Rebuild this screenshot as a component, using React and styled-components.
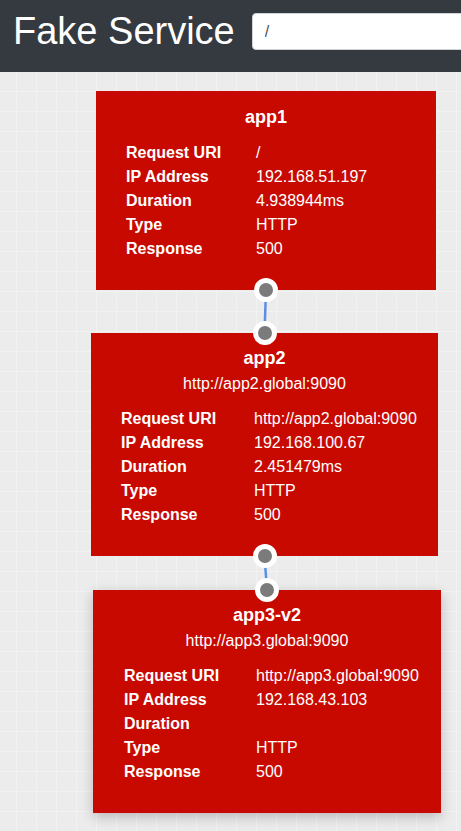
import React from 'react';
import styled, { createGlobalStyle } from 'styled-components';

const Global = createGlobalStyle`
  html, body {
    margin: 0;
    padding: 0;
    background: #ececec;
    font-family: "Liberation Sans", Arial, Helvetica, sans-serif;
    overflow: hidden;
  }
`;

const Page = styled.div`
  width: 461px;
  height: 831px;
  display: flex;
  flex-direction: column;
  overflow: hidden;
`;

const Header = styled.header`
  height: 72px;
  flex-shrink: 0;
  box-sizing: border-box;
  background: #343a40;
  display: flex;
  align-items: center;
  gap: 17px;
  padding: 0 0 9px 13px;
  overflow: hidden;
`;

const Brand = styled.h1`
  margin: 0;
  font-size: 38px;
  line-height: 1.2;
  font-weight: 400;
  color: #fff;
  white-space: nowrap;
`;

const Search = styled.input`
  flex-shrink: 0;
  width: 320px;
  height: 37px;
  box-sizing: border-box;
  padding: 6px 12px;
  border: 1px solid #ced4da;
  border-radius: 4px;
  background: #fff;
  color: #495057;
  font-family: inherit;
  font-size: 16px;
  outline: none;
`;

const Canvas = styled.main`
  position: relative;
  flex: 1;
  background-color: #ececec;
  background-image:
    linear-gradient(to right, #f2f2f2 1px, transparent 1px),
    linear-gradient(to bottom, #f2f2f2 1px, transparent 1px);
  background-size: 20px 20px;
  background-position: 16px 19px;
`;

const Edges = styled.svg`
  position: absolute;
  inset: 0;
  width: 100%;
  height: 100%;
  pointer-events: none;
`;

const Node = styled.div`
  position: absolute;
  box-sizing: border-box;
  background: #c80900;
  color: #fff;
  padding-top: ${p => p.$pad}px;
  box-shadow: ${p => (p.$selected ? '0 4px 12px rgba(0,0,0,0.22)' : 'none')};
`;

const Handle = styled.span`
  position: absolute;
  left: 50%;
  ${p => (p.$side === 'top' ? 'top: 0;' : 'bottom: 0;')}
  width: 14px;
  height: 14px;
  border: 5px solid #fff;
  border-radius: 50%;
  background: #7b7b7b;
  transform: translate(-50%, ${p => (p.$side === 'top' ? '-50%' : '50%')});
  z-index: 2;
`;

const Title = styled.div`
  text-align: center;
  font-size: 18px;
  font-weight: 700;
  line-height: 22px;
`;

const Subtitle = styled.div`
  text-align: center;
  font-size: 16px;
  line-height: 20px;
  margin-top: 5px;
`;

const Details = styled.dl`
  display: grid;
  grid-template-columns: ${p => p.$col}px 1fr;
  grid-auto-rows: 24px;
  align-items: center;
  margin: ${p => p.$gap}px 0 0;
  padding: 0 0 0 ${p => p.$indent}px;
  font-size: 16px;
`;

const Label = styled.dt`
  font-weight: 700;
  white-space: nowrap;
`;

const Value = styled.dd`
  margin: 0;
  white-space: nowrap;
`;

const nodes = [
  {
    name: 'app1', x: 96, y: 19, w: 340, h: 199, indent: 30, col: 130, pad: 15, gap: 13,
    rows: [['Request URI', '/'], ['IP Address', '192.168.51.197'], ['Duration', '4.938944ms'], ['Type', 'HTTP'], ['Response', '500']],
  },
  {
    name: 'app2', sub: 'http://app2.global:9090', x: 91, y: 261, w: 347, h: 223, indent: 30, col: 133, pad: 14, gap: 13,
    rows: [['Request URI', 'http://app2.global:9090'], ['IP Address', '192.168.100.67'], ['Duration', '2.451479ms'], ['Type', 'HTTP'], ['Response', '500']],
  },
  {
    name: 'app3-v2', sub: 'http://app3.global:9090', x: 93, y: 518, w: 348, h: 223, indent: 31, col: 132, pad: 14, gap: 13, selected: true,
    rows: [['Request URI', 'http://app3.global:9090'], ['IP Address', '192.168.43.103'], ['Duration', ''], ['Type', 'HTTP'], ['Response', '500']],
  },
];

export default function App() {
  const edges = nodes.slice(1).map((n, i) => {
    const from = nodes[i];
    return {
      x1: from.x + from.w / 2, y1: from.y + from.h,
      x2: n.x + n.w / 2, y2: n.y,
    };
  });

  return (
    <Page>
      <Global />
      <Header>
        <Brand>Fake Service</Brand>
        <Search defaultValue="/" />
      </Header>
      <Canvas>
        <Edges>
          {edges.map((e, i) => (
            <line key={i} x1={e.x1} y1={e.y1} x2={e.x2} y2={e.y2} stroke="#5b8ee6" strokeWidth="2.5" />
          ))}
        </Edges>
        {nodes.map((n, i) => (
          <Node key={n.name} $selected={n.selected} $pad={n.pad} style={{ left: n.x, top: n.y, width: n.w, height: n.h }}>
            {i > 0 && <Handle $side="top" />}
            <Title>{n.name}</Title>
            {n.sub && <Subtitle>{n.sub}</Subtitle>}
            <Details $indent={n.indent} $col={n.col} $gap={n.gap}>
              {n.rows.map(([k, v]) => (
                <React.Fragment key={k}>
                  <Label>{k}</Label>
                  <Value>{v}</Value>
                </React.Fragment>
              ))}
            </Details>
            {i < nodes.length - 1 && <Handle $side="bottom" />}
          </Node>
        ))}
      </Canvas>
    </Page>
  );
}
